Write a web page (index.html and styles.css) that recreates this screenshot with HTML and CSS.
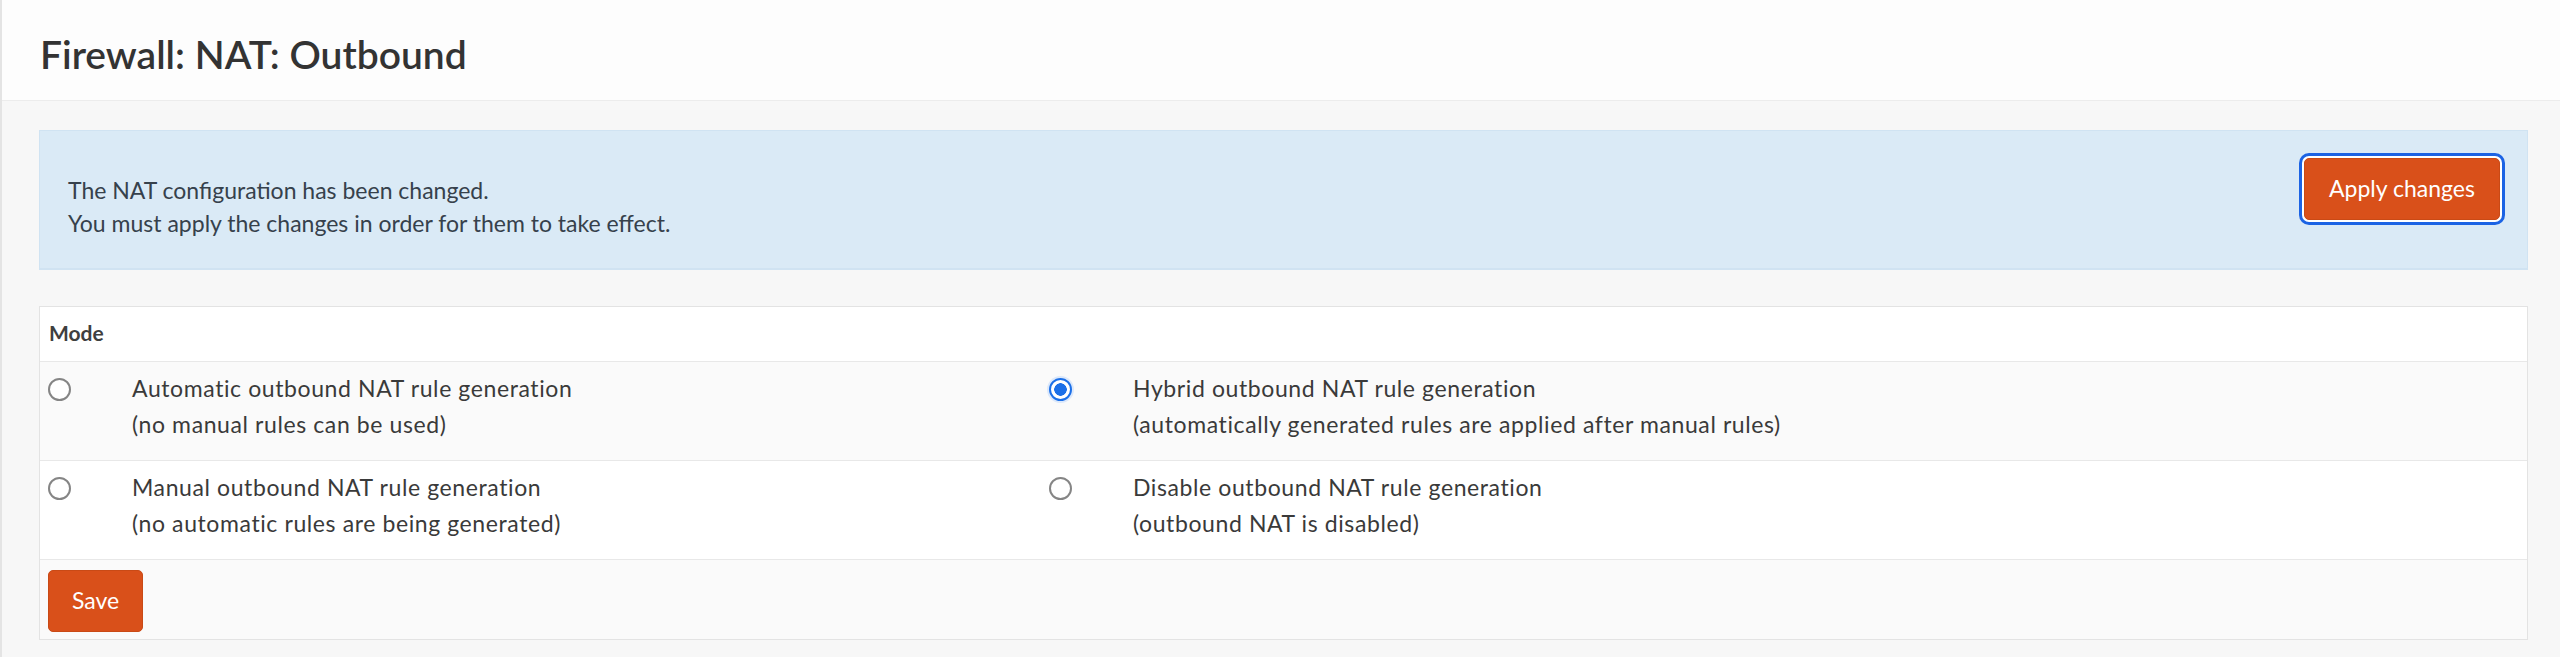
FILE: index.html
```html
<!DOCTYPE html>
<html>

<head>
    <meta http-equiv="Content-Type" content="text/html;charset=UTF-8" />
    <meta name="viewport" content="width=device-width,initial-scale=1">
    <title>Firewall: NAT: Outbound</title>
    <link rel="stylesheet" href="styles.css">
</head>

<body>
    <div class="page">
        <header class="page_head">
            <h1>Firewall: NAT: Outbound</h1>
        </header>
        <main class="content">
            <div class="alert_info">
                <button class="btn btn_primary btn_focus" type="button">Apply changes</button>
                <p>The NAT configuration has been changed.<br>You must apply the changes in order for them to take effect.</p>
            </div>
            <form class="box">
                <div class="box_head">Mode</div>
                <div class="mode_row striped">
                    <div class="cell_radio"><input type="radio" name="mode" value="automatic"></div>
                    <div class="cell_label">Automatic outbound NAT rule generation<br>(no manual rules can be used)</div>
                    <div class="cell_radio"><input type="radio" name="mode" value="hybrid" checked></div>
                    <div class="cell_label">Hybrid outbound NAT rule generation<br>(automatically generated rules are applied after manual rules)</div>
                </div>
                <div class="mode_row">
                    <div class="cell_radio"><input type="radio" name="mode" value="advanced"></div>
                    <div class="cell_label">Manual outbound NAT rule generation<br>(no automatic rules are being generated)</div>
                    <div class="cell_radio"><input type="radio" name="mode" value="disabled"></div>
                    <div class="cell_label">Disable outbound NAT rule generation<br>(outbound NAT is disabled)</div>
                </div>
                <div class="save_row striped">
                    <button class="btn btn_primary" type="button">Save</button>
                </div>
            </form>
        </main>
    </div>
</body>

</html>
```

FILE: styles.css
```css
* {
    margin: 0;
    padding: 0;
    box-sizing: border-box;
}

html {
    font-size: 23px;
    font-family: "Lato", "Liberation Sans", sans-serif;
    background-color: #f7f7f7;
    color: #3a3a3a;
}

body {
    min-height: 657px;
}

.page {
    min-height: 657px;
    border-left: 2px solid #e4e4e4;
}

.page_head {
    height: 101px;
    padding: 33px 0 0 38px;
    background: #fdfdfd;
    border-bottom: 1px solid #ececec;
}

.page_head h1 {
    font-size: 39px;
    line-height: 43px;
    font-weight: 600;
    color: #333;
}

.content {
    padding: 29px 32px 0 37px;
}

.alert_info {
    padding: 27px 27px 28px 28px;
    background: #daeaf6;
    border: 1px solid #d0e3f2;
    border-bottom-width: 2px;
    color: #36414c;
    line-height: 33px;
    margin-bottom: 36px;
}

.alert_info p {
    padding-top: 16px;
}

.btn {
    font-family: inherit;
    font-size: 23px;
    line-height: 33px;
    border: 1px solid #c94a16;
    border-radius: 5px;
    padding: 13px 0 14px;
    cursor: pointer;
}

.btn_primary {
    background: #d9501a;
    color: #fff;
}

.alert_info .btn {
    float: right;
    width: 196px;
}

.btn_focus {
    box-shadow: 0 0 0 2px #fff, 0 0 0 5px #1b63e4;
}

.box {
    background: #fff;
    border: 1px solid #e3e3e3;
}

.box_head {
    padding: 9px 9px;
    font-size: 21px;
    line-height: 33px;
    height: 54px;
    font-weight: 700;
    color: #3f3f3f;
}

.mode_row {
    display: grid;
    grid-template-columns: 82px 919px 82px 1fr;
    border-top: 1px solid #e8e8e8;
    height: 99px;
}

.striped {
    background: #fafafa;
}

.cell_radio {
    padding: 16px 8px 0;
}

.cell_label {
    padding: 8px 10px 16px;
    line-height: 36px;
    letter-spacing: 0.6px;
}

.cell_radio input {
    appearance: none;
    display: block;
    width: 23px;
    height: 23px;
    border: 2px solid #858585;
    border-radius: 50%;
    background: #fff;
}

.cell_radio input:checked {
    border-color: #1b6fe8;
    background: radial-gradient(circle, #1b6fe8 0 6px, #fff 6.5px);
    box-shadow: 0 0 0 2px #dbe8fb;
}

.save_row {
    border-top: 1px solid #e8e8e8;
    padding: 10px 8px;
    height: 80px;
}

.save_row .btn {
    width: 95px;
}
```
